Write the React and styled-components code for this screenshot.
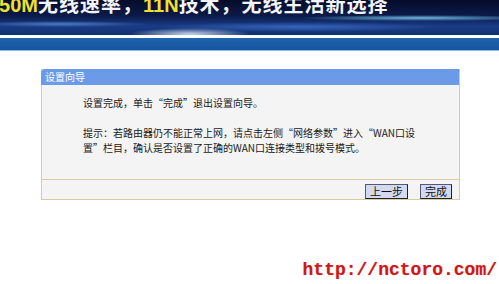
import styled, { createGlobalStyle } from 'styled-components';

const GlobalStyle = createGlobalStyle`
    html, body {
        margin: 0;
        padding: 0;
        background: #ffffff;
    }
    body {
        font-family: 'Noto Sans CJK SC', 'Noto Sans', sans-serif;
        width: 499px;
        height: 284px;
        overflow: hidden;
    }
`;

export default function App() {
    return (
        <Pagina>
            <GlobalStyle />
            <Banner>
                <Slogan>
                    <Amarelo>150M</Amarelo>无线速率，<Amarelo>11N</Amarelo>技术，无线生活新选择
                </Slogan>
            </Banner>
            <BarraAzul />
            <Painel>
                <Cabecalho>设置向导</Cabecalho>
                <Corpo>
                    <Paragrafo>设置完成，单击“完成”退出设置向导。</Paragrafo>
                    <Paragrafo>
                        提示：若路由器仍不能正常上网，请点击左侧“网络参数”进入“WAN口设<br />
                        置”栏目，确认是否设置了正确的WAN口连接类型和拨号模式。
                    </Paragrafo>
                </Corpo>
                <Rodape>
                    <Botao>上一步</Botao>
                    <Botao>完成</Botao>
                </Rodape>
            </Painel>
            <Marca>http://nctoro.com/</Marca>
        </Pagina>
    );
}

const Pagina = styled.div`
    display: flex;
    flex-direction: column;
    width: 499px;
    height: 284px;
    overflow: hidden;
`;

const Banner = styled.div`
    height: 35px;
    overflow: hidden;
    margin-bottom: 3px;
    background:
        radial-gradient(ellipse 60px 6px at 190px 34px, rgba(230, 240, 255, 0.85), rgba(230, 240, 255, 0) 100%),
        radial-gradient(ellipse 120px 3px at 420px 18px, rgba(120, 200, 240, 0.9), rgba(120, 200, 240, 0) 100%),
        radial-gradient(ellipse 90px 3px at 60px 24px, rgba(90, 140, 220, 0.8), rgba(90, 140, 220, 0) 100%),
        radial-gradient(ellipse 140px 5px at 300px 27px, rgba(60, 110, 200, 0.8), rgba(60, 110, 200, 0) 100%),
        linear-gradient(180deg, #060c2a 0%, #0b1a48 45%, #1a3c86 75%, #10306e 100%);
`;

const Slogan = styled.div`
    margin-top: -8px;
    margin-left: -12px;
    font-size: 20px;
    font-weight: 700;
    line-height: 24px;
    letter-spacing: 1px;
    color: #f2f4fa;
    white-space: nowrap;
    font-family: 'Noto Sans CJK SC', 'Noto Sans', sans-serif;
`;

const Amarelo = styled.span`
    color: #f0e030;
    letter-spacing: 0;
    font-family: 'Liberation Sans', 'Noto Sans CJK SC', sans-serif;
`;

const BarraAzul = styled.div`
    height: 12px;
    background: linear-gradient(180deg, #2062ad 0%, #17559e 100%);
    border-bottom: 1px solid #8cbde6;
`;

const Painel = styled.div`
    margin: 18px 0 0 41px;
    width: 417px;
    border: 1px solid #dccaa0;
    border-top: none;
    background: #f4f4f4;
    display: flex;
    flex-direction: column;
`;

const Cabecalho = styled.div`
    height: 16px;
    line-height: 16px;
    padding-left: 4px;
    background: #6b9be8;
    color: #ffffff;
    font-size: 10px;
    border-radius: 4px 0 0 0;
    margin-left: -1px;
`;

const Corpo = styled.div`
    padding: 10px 10px 24px 41px;
    display: flex;
    flex-direction: column;
    gap: 15px;
`;

const Paragrafo = styled.p`
    margin: 0;
    font-size: 10px;
    line-height: 15px;
    color: #1a1a1a;
    white-space: nowrap;
`;

const Rodape = styled.div`
    border-top: 1px solid #dccaa0;
    height: 19px;
    display: flex;
    justify-content: flex-end;
    align-items: center;
    gap: 12px;
    padding-right: 7px;
`;

const Botao = styled.button`
    font-family: 'Noto Sans CJK SC', sans-serif;
    font-size: 11px;
    line-height: 12px;
    padding: 0 4px;
    height: 15px;
    background: #d3daf0;
    color: #111111;
    border: 1px solid #555a70;
    border-right-color: #222;
    border-bottom-color: #222;
    border-radius: 0;
    margin-top: 3px;
`;

const Marca = styled.div`
    margin-top: auto;
    margin-bottom: 4px;
    align-self: flex-end;
    padding-right: 2px;
    font-family: 'Liberation Mono', monospace;
    font-weight: 700;
    font-size: 18px;
    line-height: 20px;
    color: #d01818;
    text-shadow: 0 0 1px rgba(208, 24, 24, 0.4);
`;
